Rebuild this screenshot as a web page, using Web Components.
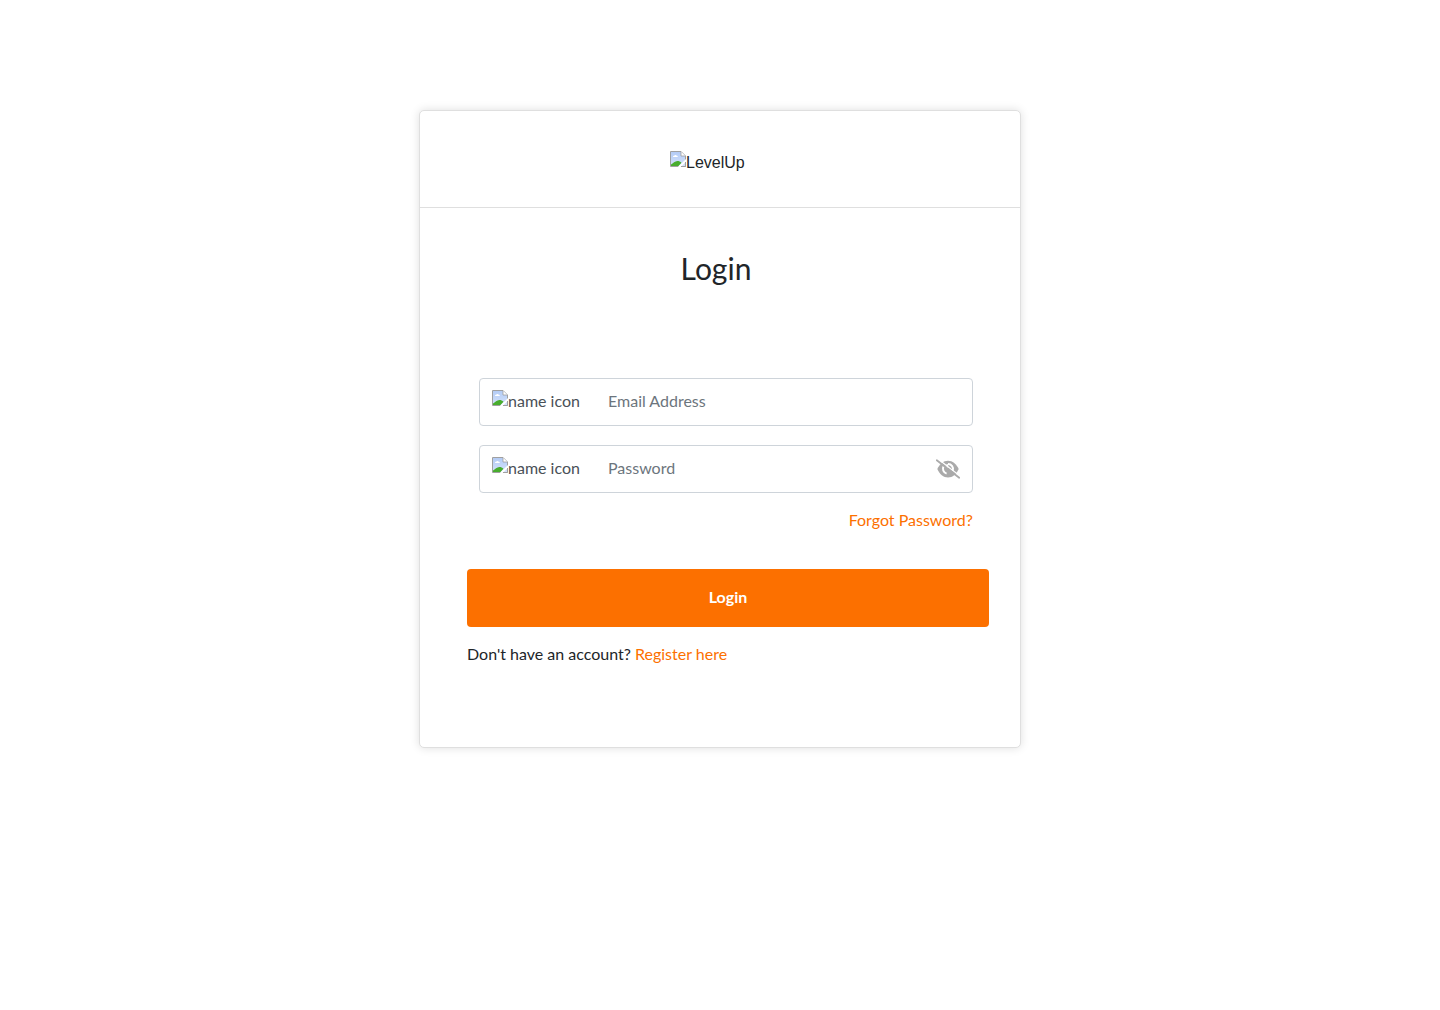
<!DOCTYPE html>
<html lang="en">
<head>
<meta charset="utf-8">
<title>Login</title>
<style>
body{margin:0;background:#fff;color:#212529;font:16px/24px Lato,"Liberation Sans",sans-serif}
</style>
</head>
<body>
<login-page></login-page>
<script>
const define = (name, markup) => customElements.define(name, class extends HTMLElement {
  constructor() {
    super();
    this.attachShadow({mode: 'open'}).innerHTML = markup;
  }
});

define('missing-image', `
<style>
:host{display:inline-flex;align-items:flex-start;height:24px;white-space:nowrap}
svg{display:block;width:16px;height:16px;flex:none;margin-top:var(--icon-drop,0px)}
</style>
<svg viewBox="0 0 16 16">
  <defs><linearGradient id="sky" x2="0" y2="1"><stop stop-color="#b4ccf6"/><stop offset="1" stop-color="#d3e1fa"/></linearGradient></defs>
  <path d="M.5.5h10.5l4.5 4.5v10.5H.5z" fill="#e8effb" stroke="#a0a0a0"/>
  <path d="M1 1h10v4h4v10H1z" fill="url(#sky)"/>
  <path d="M3 6c0-.8.5-1.3 1.2-1.3C4.6 3.6 6.3 3.6 6.7 4.8 7.4 4.8 7.8 5.3 7.8 6z" fill="#fff"/>
  <path d="M11 .7v4.3h4.3" fill="#fff" stroke="#a0a0a0" stroke-width=".8"/>
  <path d="M1 15v-1.4C3 12.4 5 10 7.3 10c1.8 0 3 .6 4.2 1.7L8.5 15z" fill="#48ad2e"/>
  <path d="M16 8v2.7L10.7 16H7.8z" fill="#fff"/>
  <path d="M15.5 11v4.5H11" fill="none" stroke="#a0a0a0"/>
</svg><slot></slot>`);

define('eye-toggle', `
<style>:host{display:block;width:24px;height:20px}svg{display:block;width:24px;height:20px}</style>
<svg viewBox="0 0 24 20" fill="none">
  <path d="M1.3 10C3.5 5 7.5 1.7 12 1.7S20.5 5 22.7 10C20.5 15 16.5 18.5 12 18.5S3.5 15 1.3 10z" fill="#aaa"/>
  <path d="M7.6 7.3A5 5 0 0 0 10.6 14.6M12 5A5 5 0 0 1 16.8 11.6" stroke="#fff" stroke-width="2"/>
  <path d="M11.3 5.2v3.8" stroke="#fff" stroke-width="1.8"/>
  <path d="M1.9-.1L24.6 17.5" stroke="#fff" stroke-width="1.3"/>
  <path d="M.8 1.3L23.2 18.8" stroke="#aaa" stroke-width="1.8" stroke-linecap="round"/>
</svg>`);

define('input-row', `
<style>
:host{display:flex;align-items:center;box-sizing:border-box;height:48px;padding:0 12px;border:1px solid #ced4da;border-radius:4px}
.prefix{width:116px;color:#495057;display:flex;padding-bottom:2px;--icon-drop:1px}
.hint{flex:1;color:#6c757d;padding-bottom:2px}
</style>
<div class="prefix"><missing-image>name icon</missing-image></div>
<div class="hint"><slot></slot></div><slot name="action"></slot>`);

define('action-button', `
<style>
:host{display:flex;align-items:center;justify-content:center;height:58px;padding-bottom:2px;box-sizing:border-box;border-radius:4px;background:#fc7000;color:#fff;font-weight:700}
</style><slot></slot>`);

define('text-link', `<style>:host{display:inline;color:#fc7000}</style><slot></slot>`);

define('login-card', `
<style>
:host{display:block;box-sizing:border-box;width:602px;height:638px;border:1px solid #dfdfdf;border-radius:5px;background:#fff;box-shadow:0 0 10px rgba(0,0,0,.13)}
header{display:flex;box-sizing:border-box;height:97px;padding:40px 0 0 250px;border-bottom:1px solid #dfdfdf;font-family:"Liberation Sans",sans-serif}
</style>
<header><slot name="brand"></slot></header><slot></slot>`);

define('login-page', `
<style>
:host{display:flex;justify-content:center;align-items:flex-start;box-sizing:border-box;min-height:1010px;padding-top:110px}
h1{margin:41px 8px 0 0;text-align:center;font-weight:400;font-size:30px;line-height:38px}
.fields{display:flex;flex-direction:column;gap:19px;margin:91px 47px 0 59px}
.forgot{text-align:right;margin:15px 47px 0 0}
.submit{margin:37px 31px 0 47px}
.register{margin:15px 0 0 47px}
</style>
<login-card>
  <missing-image slot="brand">LevelUp</missing-image>
  <h1>Login</h1>
  <div class="fields">
    <input-row>Email Address</input-row>
    <input-row>Password<eye-toggle slot="action"></eye-toggle></input-row>
  </div>
  <div class="forgot"><text-link>Forgot Password?</text-link></div>
  <action-button class="submit">Login</action-button>
  <div class="register">Don't have an account? <text-link>Register here</text-link></div>
</login-card>`);
</script>
</body>
</html>
